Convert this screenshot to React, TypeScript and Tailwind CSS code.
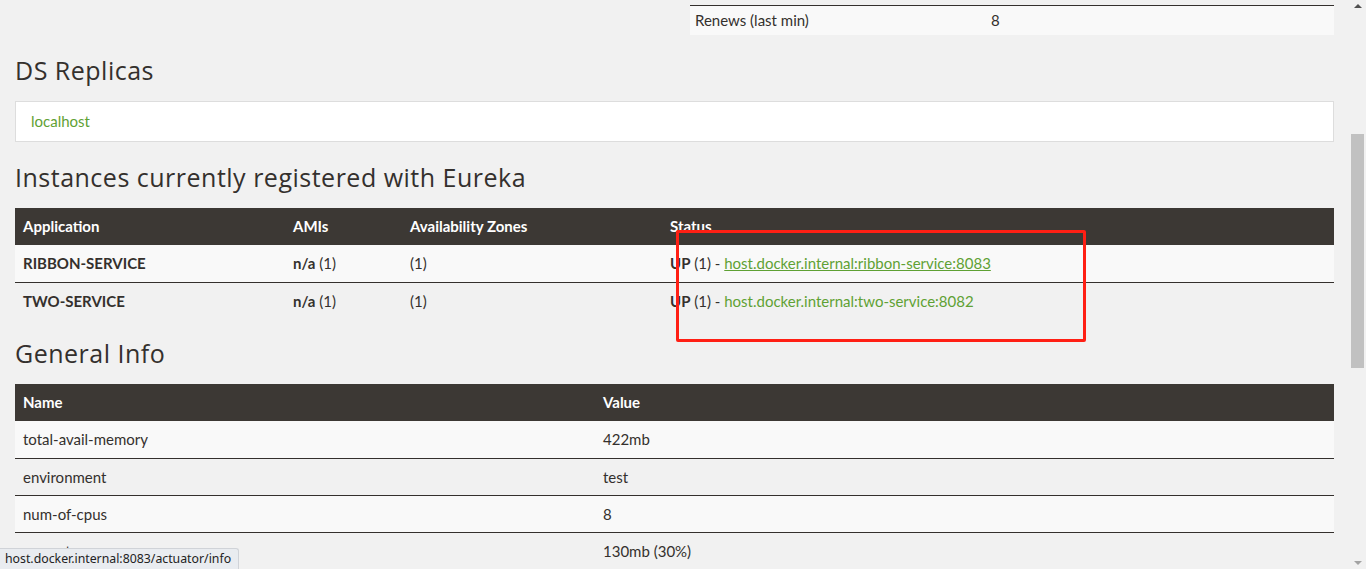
import React from "react";

const body = { fontFamily: "Lato, 'Open Sans', sans-serif" } as const;
const head = { fontFamily: "'Open Sans', 'Noto Sans', sans-serif" } as const;

function H2({ children }: { children: React.ReactNode }) {
  return (
    <h2 style={head} className="h-[30px] text-[25px] leading-[30px] font-medium tracking-[0.5px] text-[#34302d]">
      {children}
    </h2>
  );
}

function Row({ first, striped, children }: { first?: boolean; striped?: boolean; children: React.ReactNode }) {
  return (
    <div
      className={
        "flex h-[37px] items-center text-[15px] text-[#34302d] " +
        (first ? "" : "border-t border-[#34302d] ") +
        (striped ? "bg-[#f9f9f9]" : "")
      }
    >
      {children}
    </div>
  );
}

export default function App() {
  return (
    <div style={body} className="relative flex h-[569px] w-full overflow-hidden bg-[#f1f1f1]">
      <div className="w-[1349px] px-[15px]">
        {/* top partial table */}
        <div className="flex justify-end pt-[5px]">
          <div className="w-[644px] border-t border-[#34302d]">
            <div className="flex h-[29px] items-center bg-[#f9f9f9] pl-[5px] text-[15px] text-[#34302d]">
              <span className="w-[296px]">Renews (last min)</span>
              <span>8</span>
            </div>
          </div>
        </div>

        <div className="mt-[20px]">
          <H2>DS Replicas</H2>
        </div>
        <div className="mt-[16px] flex h-[41px] items-center border border-[#dddddd] bg-white pl-[15px] text-[15px] text-[#5fa134]">
          localhost
        </div>

        <div className="mt-[20px]">
          <H2>Instances currently registered with Eureka</H2>
        </div>
        <div className="mt-[16px]">
          <div className="flex h-[37px] items-center bg-[#3c3834] text-[15px] font-bold text-white">
            <span className="w-[270px] pl-[8px]">Application</span>
            <span className="w-[117px] pl-[8px]">AMIs</span>
            <span className="w-[260px] pl-[8px]">Availability Zones</span>
            <span className="pl-[8px]">Status</span>
          </div>
          <Row first striped>
            <span className="w-[270px] pl-[8px] font-bold">RIBBON-SERVICE</span>
            <span className="w-[117px] pl-[8px]"><b>n/a</b> (1)</span>
            <span className="w-[260px] pl-[8px]">(1)</span>
            <span className="pl-[8px]">
              <b>UP</b> (1) - <span className="text-[#5fa134] underline">host.docker.internal:ribbon-service:8083</span>
            </span>
          </Row>
          <Row>
            <span className="w-[270px] pl-[8px] font-bold">TWO-SERVICE</span>
            <span className="w-[117px] pl-[8px]"><b>n/a</b> (1)</span>
            <span className="w-[260px] pl-[8px]">(1)</span>
            <span className="pl-[8px]">
              <b>UP</b> (1) - <span className="text-[#5fa134]">host.docker.internal:two-service:8082</span>
            </span>
          </Row>
        </div>

        <div className="mt-[19px]">
          <H2>General Info</H2>
        </div>
        <div className="mt-[16px]">
          <div className="flex h-[37px] items-center bg-[#3c3834] text-[15px] font-bold text-white">
            <span className="w-[580px] pl-[8px]">Name</span>
            <span className="pl-[8px]">Value</span>
          </div>
          {[
            ["total-avail-memory", "422mb"],
            ["environment", "test"],
            ["num-of-cpus", "8"],
            ["current-memory-usage", "130mb (30%)"],
          ].map(([n, v], i) => (
            <Row key={n} first={i === 0} striped={i % 2 === 0}>
              <span className="w-[580px] pl-[8px]">{n}</span>
              <span className="pl-[8px]">{v}</span>
            </Row>
          ))}
        </div>
      </div>

      {/* scrollbar */}
      <div className="flex w-[17px] flex-col items-center bg-[#f1f1f1]">
        <div className="mt-[4px] h-0 w-0 border-x-[4px] border-b-[4px] border-x-transparent border-b-[#505050]" />
        <div className="mt-[126px] h-[234px] w-[13px] bg-[#c1c1c1]" />
        <div className="mt-auto mb-[4px] h-0 w-0 border-x-[4px] border-t-[4px] border-x-transparent border-t-[#a3a3a3]" />
      </div>

      {/* red annotation */}
      <div className="absolute left-[676px] top-[230px] h-[112px] w-[410px] rounded-[2px] border-[3px] border-[#ff1f14]" />

      {/* status bar */}
      <div
        style={{ fontFamily: "'Noto Sans', 'Open Sans', sans-serif" }}
        className="absolute bottom-0 left-0 flex h-[21px] items-center rounded-tr-[3px] border-t border-r border-[#d0d3d8] bg-[#e9ecf0] pl-[5px] pr-[7px] text-[12.3px] text-[#222]"
      >
        host.docker.internal:8083/actuator/info
      </div>
    </div>
  );
}
